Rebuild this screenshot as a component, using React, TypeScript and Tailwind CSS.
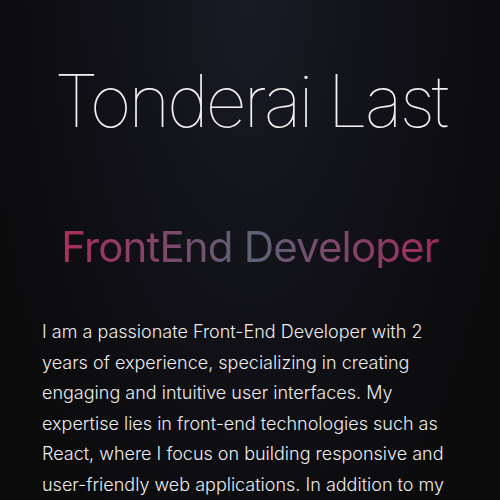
export default function App() {
  return (
    <main className="min-h-screen w-full bg-[radial-gradient(ellipse_at_top,#191a24_0%,#101016_45%,#0b0b0c_80%)] font-['Inter',sans-serif] text-white">
      <section className="flex flex-col items-center px-[42px] pt-[65px]">
        <h1 className="whitespace-nowrap text-[72px] font-thin leading-none tracking-[-0.045em] text-[#f2f2f2]">
          Tonderai Last
        </h1>
        <h2 className="mt-[89px] whitespace-nowrap bg-[linear-gradient(90deg,#a92f5c_0%,#7a4a6c_30%,#5c6478_50%,#7a4a6c_70%,#9e2b5c_100%)] bg-clip-text text-[42px] font-normal leading-none tracking-[-0.02em] text-transparent">
          FrontEnd Developer
        </h2>
        <p className="mt-[49px] w-full text-[18px] font-light leading-[30.6px] text-[#ececec]">
          I am a passionate Front-End Developer with 2 years of experience, specializing in creating engaging and
          intuitive user interfaces. My expertise lies in front-end technologies such as React, where I focus on
          building responsive and user-friendly web applications. In addition to my technical skills, I enjoy
          collaborating with teams to turn ideas into polished digital experiences.
        </p>
      </section>
    </main>
  );
}
